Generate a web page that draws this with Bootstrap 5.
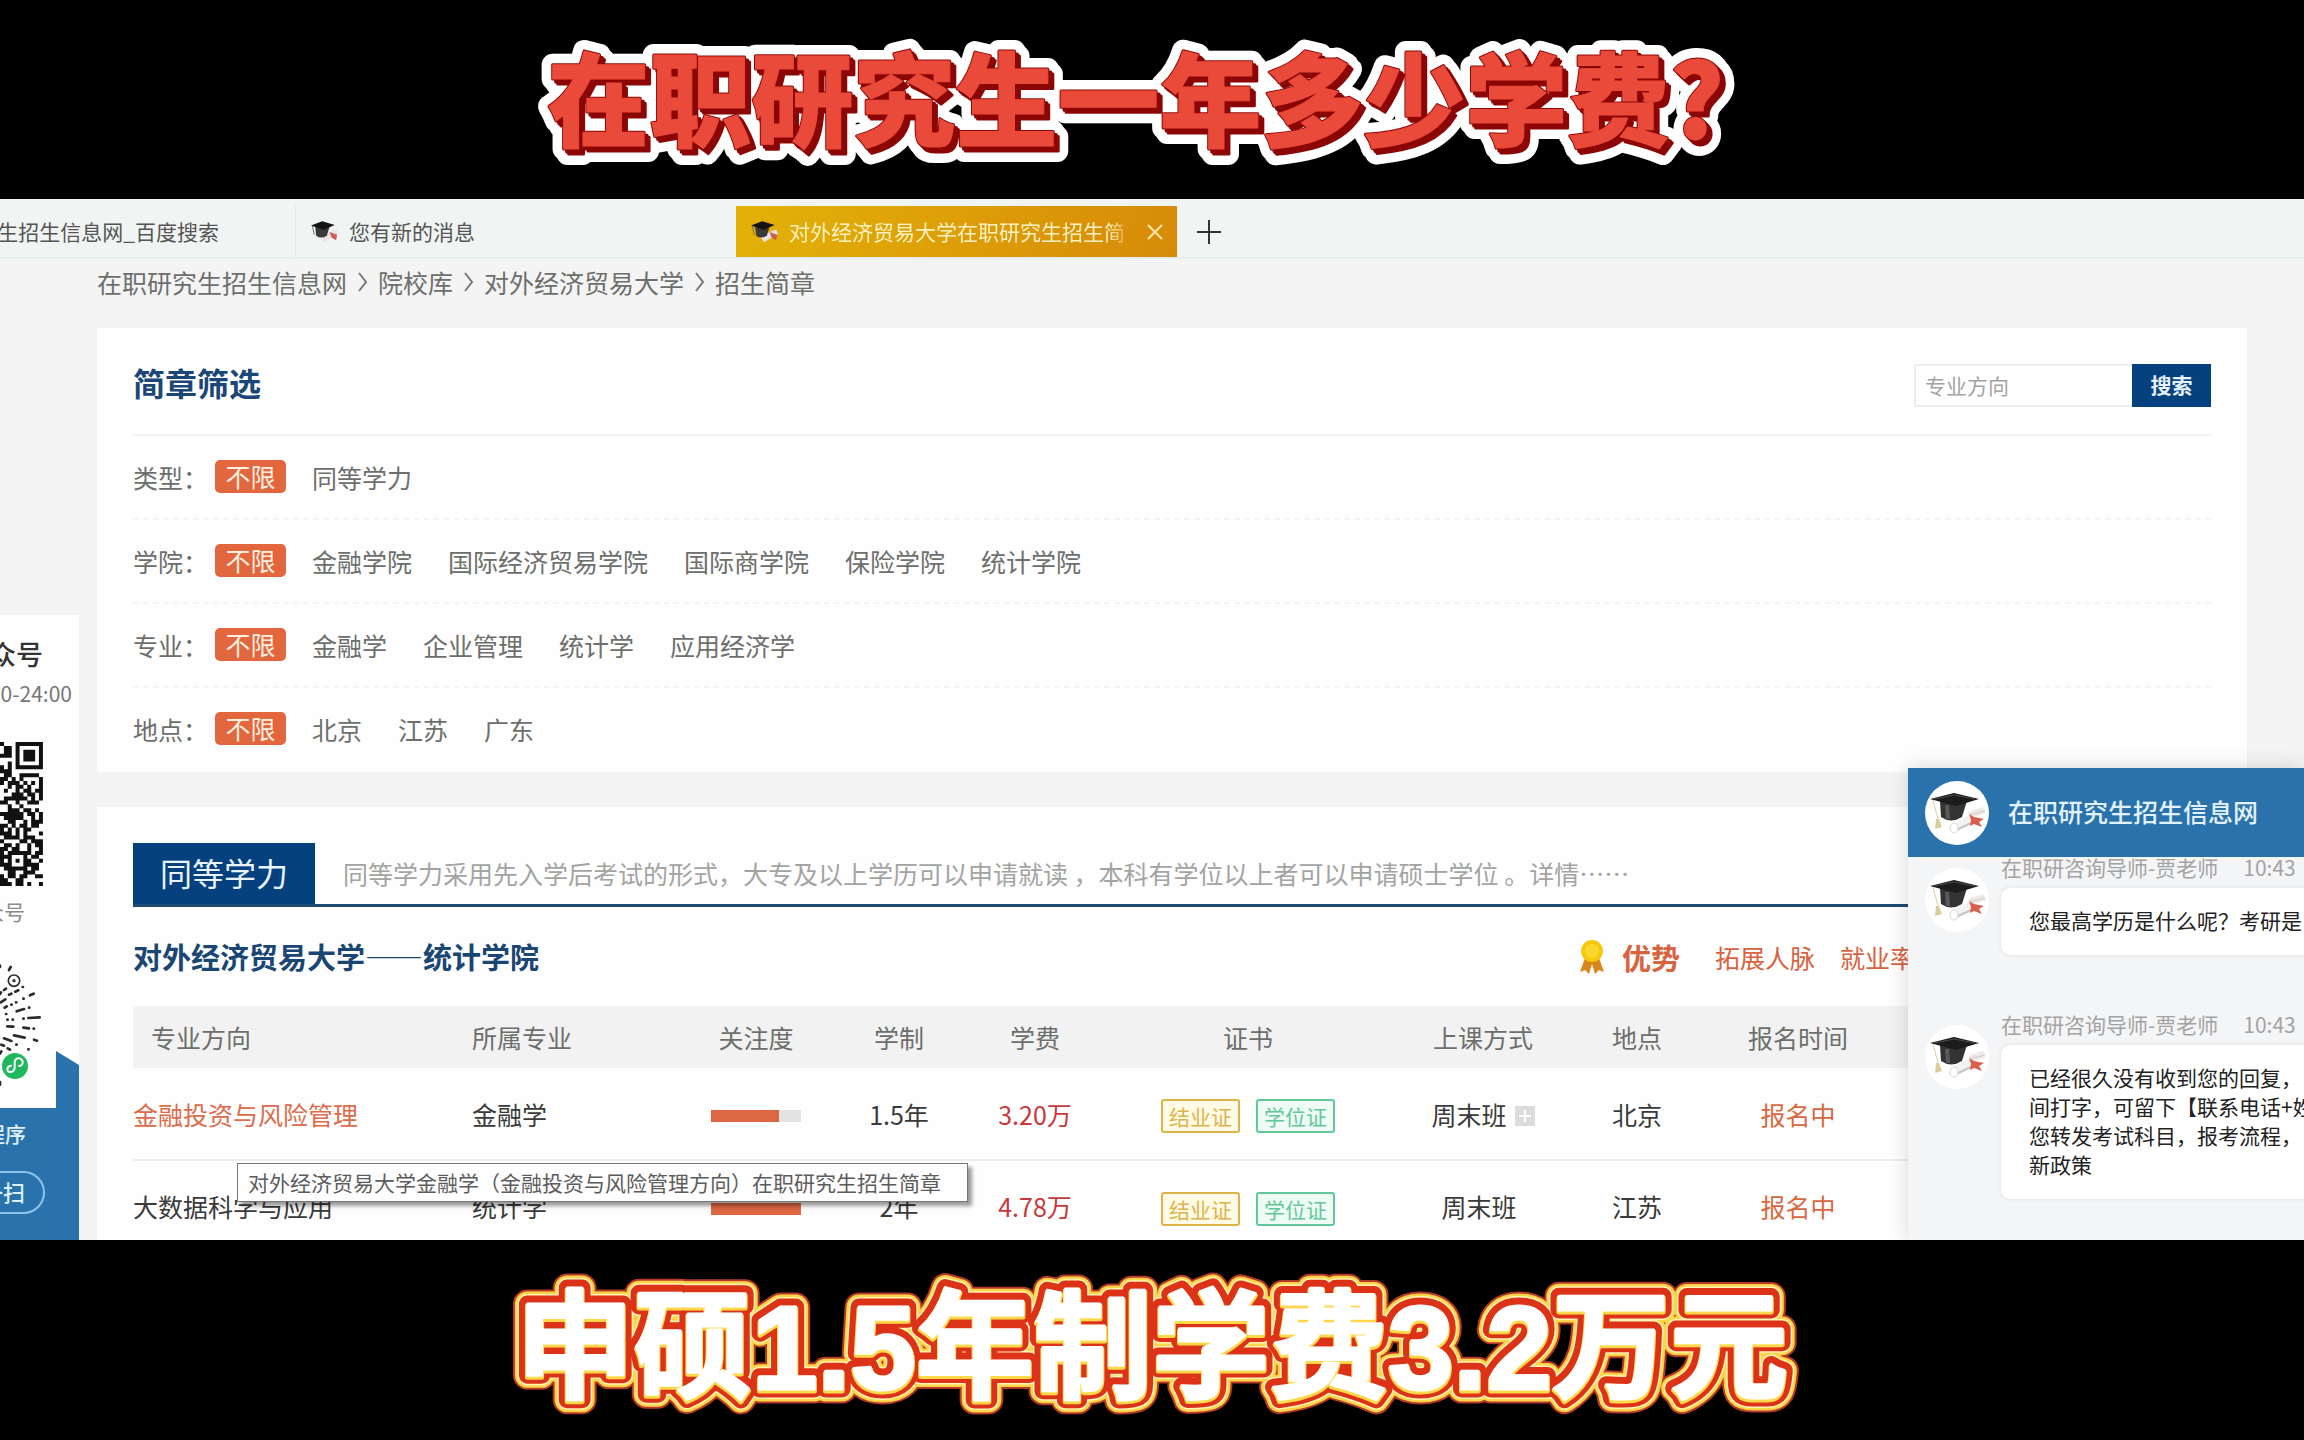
<!DOCTYPE html>
<html lang="zh-CN">
<head>
<meta charset="utf-8">
<meta name="viewport" content="width=device-width, initial-scale=1">
<title>在职研究生招生简章</title>
<link rel="stylesheet" href="https://cdn.jsdelivr.net/npm/bootstrap@5.3.0/dist/css/bootstrap.min.css">
<style>
  :root { --navy:#05407f; --sky:#2a72ac; --orange:#e2663e; --ink:#3a3a3a; --soft:#6c6f6c; }
  body { font-family:"Noto Sans CJK SC","Noto Sans",sans-serif; font-size:25px; line-height:34px; color:var(--soft); }
  a { color:inherit; text-decoration:none; }
  .banner-strip { height:200px; }
  .banner-strip.top-strip { height:199px; }
  .banner-strip svg { width:100%; height:100%; display:block; }
  .banner-word { font-weight:900; stroke-linejoin:round; text-anchor:middle; }
  .size-a { font-size:102px; }
  .size-b { font-size:118px; font-weight:700; font-family:"Liberation Sans","Noto Sans CJK SC",sans-serif; }
  .browser-bar { background:#f0f4f2; height:60px; padding-top:7px; border-bottom:2px solid #e6ebeb; font-size:21px; color:#555; }
  .tab-item { width:441px; height:51px; padding:0 12px 0 15px; gap:11px; white-space:nowrap; border-left:1px solid #e3e8e6; }
  .tab-item a { padding-bottom:2px; }
  .tab-first { width:295px; padding:0 76px 0 0; border:0; }
  .tab-item.active-tab { background:linear-gradient(110deg,#e2b208,#dc9a08 60%,#d68a0a); color:#fff3c4; border:0; }
  .tab-title { mask-image:linear-gradient(90deg,#000 92%,transparent); -webkit-mask-image:linear-gradient(90deg,#000 92%,transparent); }
  .plain-btn { background:none; border:0; padding:0; color:inherit; line-height:1; display:flex; }
  .crumbs { padding:6px 97px 29px; gap:7px; }
  .panel { margin:0 57px 35px 97px; background:#fefefe; padding:36px; }
  .panel-filter { padding-bottom:0; }
  .filter-head { padding-bottom:27px; border-bottom:2px solid #f3f3f3; }
  .filter-head h2 { font-size:32px; line-height:37px; font-weight:700; color:#1a4778; }
  .search-box { width:297px; height:43px; }
  .search-box input { font-size:21px; border:2px solid #eee; border-right:0; border-radius:0; padding:0 9px 2px; }
  .search-box input::placeholder { color:#a3a3a3; }
  .search-box button { width:79px; background:var(--navy); color:#e6f3ff; font-size:21px; font-weight:700; border:0; padding:0 0 3px; }
  .filter-row { height:84px; border-bottom:2px dashed #f4f4f4; gap:36px; padding-bottom:1px; }
  .filter-row:last-child { border-bottom:0; padding-bottom:3px; }
  .filter-lead { gap:7px; margin-right:-10px; }
  .pill { background:var(--orange); color:#fff0e2; border-radius:5px; width:71px; line-height:33px; text-align:center; }
  .type-head { border-bottom:3px solid #1e4a74; gap:28px; }
  .type-head h2 { width:182px; font-size:32px; line-height:59px; padding-bottom:2px; background:var(--navy); color:#eaf4ff; text-align:center; }
  .type-head p { color:#a2a4a2; padding-bottom:2px; }
  .school-row { height:99px; }
  .school-row h3 { font-size:29px; font-weight:700; color:#1a4674; }
  .perks { width:631px; color:#d9623f; gap:25px; }
  .perks strong { font-size:29px; margin:0 10px 0 -7px; }
  .plan { table-layout:fixed; width:100%; color:var(--ink); }
  .plan th { background:#f2f2f2; color:#6c6f6c; font-weight:400; height:62px; padding:0; text-align:center; }
  .plan td { height:92px; padding:0; text-align:center; border-bottom:2px solid #ededed; vertical-align:middle; }
  .plan th:nth-child(-n+2), .plan td:nth-child(-n+2) { text-align:left; }
  .plan th:first-child { padding-left:18px; }
  .plan .fee { color:#c6393a; }
  .plan .open { color:#d9683f; }
  .plan .padded { padding:5px 0 0; }
  .heat { width:90px; height:12px; border-radius:0; background:#e3e3e3; margin:0 auto; }
  .heat div { background:#dc6742; }
  .cert { font-size:21px; line-height:30px; width:79px; border:2px solid; border-radius:3px; }
  .cert-a { color:#dcb44a; background:#fffbe6; }
  .cert-b { color:#62c79b; background:#eefcf5; }
  .hover-tip { left:104px; top:95px; z-index:3; background:#fefefe; border:1px solid #777; box-shadow:4px 4px 4px rgba(0,0,0,.4); padding:0 12px 0 10px; width:731px; font-size:21px; line-height:37px; color:#5c5c5c; white-space:nowrap; text-align:left; }
  .side-card { left:0; top:416px; bottom:0; width:79px; background:#fefefe; overflow:hidden; z-index:4; }
  .side-line { white-space:nowrap; display:flex; justify-content:flex-end; }
  .side-title { font-size:27px; font-weight:500; line-height:38px; color:#333; padding:20px 36px 0 0; }
  .side-hours { font-size:21px; color:#777; line-height:40px; padding-right:7px; }
  .side-note { font-size:21px; color:#8a8a8a; padding-right:54px; line-height:30px; margin:10px 0 33px; }
  .side-foot { left:0; bottom:0; width:79px; height:189px; background:var(--sky); color:#dff0fb; clip-path:polygon(0 57px,56px 57px,56px 0,79px 14px,79px 100%,0 100%); padding-top:67px; font-size:21px; line-height:30px; font-weight:500; }
  .scan-btn { background:none; color:inherit; border:2px solid #8fc4ea; border-radius:22px; height:43px; width:90px; margin:23px 0 0 -45px; padding:0 18px 3px 0; font-size:22px; font-weight:500; text-align:right; display:block; white-space:nowrap; }
  .chat { right:0; top:569px; bottom:0; width:396px; background:#f4f5f7; z-index:5; box-shadow:0 0 20px rgba(0,0,0,.16); overflow:hidden; }
  .chat-head { background:var(--sky); color:#e2f2fd; height:89px; padding-left:17px; gap:19px; font-weight:500; }
  .avatar { width:64px; height:64px; border-radius:50%; background:#fff; flex:none; }
  .chat-msg { padding-left:17px; gap:12px; margin-bottom:59px; white-space:nowrap; font-size:21px; }
  .chat-msg .avatar { margin-top:11px; }
  .msg-name { color:#a3a3a3; line-height:20px; gap:25px; margin-bottom:11px; }
  .bubble { background:#fff; color:#222; border-radius:9px; padding:18px 28px 20px; line-height:29px; box-shadow:0 0 4px rgba(0,0,0,.1); width:440px; }
</style>
<script src="https://cdn.jsdelivr.net/npm/bootstrap@5.3.0/dist/js/bootstrap.bundle.min.js"></script>
</head>
<body class="bg-black vh-100 d-flex flex-column overflow-hidden">

<svg width="0" height="0" class="position-absolute" aria-hidden="true">
  <symbol id="cap" viewBox="0 0 64 64">
    <path d="M43 31 58 26 61 32 46 37z" fill="#eee9e6"/><path d="M45 34 60 30" stroke="#cfcac8"/>
    <path d="M26 43 44 34 47 42 31 51z" fill="#f3f1f1"/><path d="M29 50 46 42" stroke="#c9c5c5" stroke-width="2"/>
    <ellipse cx="29" cy="47" rx="4" ry="5" fill="#fff" stroke="#d8d4d4"/>
    <path d="M44 33 49 36 59 38 54 41 57 46 49 43 45 45 46 39z" fill="#d8604c"/>
    <path d="M15 20 16 36 Q26 43 37 36 L42 20z" fill="#333"/><path d="M22 24 23 38" stroke="#5a5a5a" stroke-width="4"/>
    <path d="M5 18 29 12 54 18 31 25z" fill="#1c1c1c"/><path d="M9 18 29 14 50 18" fill="none" stroke="#4b4b4b"/>
    <path d="M8 19 13 38" fill="none" stroke="#d8cfa0"/><path d="M11 38 14 38 17 46 10 48z" fill="#d9cf9c"/>
  </symbol>
  <symbol id="cap-small" viewBox="4 8 58 46">
    <path d="M24 42 58 26 62 36 32 54z" fill="#e9e2e2"/><path d="M44 32 60 38 58 50 48 44z" fill="#cf5b55"/>
    <path d="M13 20 15 40 Q26 48 38 40 L44 20z" fill="#3a3a3a"/><path d="M4 18 28 9 55 17 31 27z" fill="#141414"/>
    <path d="M7 19 11 38" stroke="#6b6550" stroke-width="2"/>
  </symbol>
</svg>

<header class="banner-strip top-strip flex-shrink-0">
  <svg role="img" aria-label="标题">
    <g fill="#fff" stroke="#fff" stroke-width="22"><use href="#headline"/><use href="#headline" x="4" y="5"/></g>
    <g fill="#8c0606" stroke="#8c0606" stroke-width="3"><use href="#headline" x="5" y="5"/><use href="#headline" x="3" y="3"/><use href="#headline"/></g>
    <g fill="#ea4a39" stroke="#ea4a39" stroke-width="1"><text id="headline" class="banner-word size-a" x="49.3%" y="139">在职研究生一年多少学费?</text></g>
  </svg>
</header>

<main class="position-relative flex-grow-1 overflow-hidden" style="background:#f4f4f4">
  <nav class="browser-bar d-flex" aria-label="标签页">
    <div class="tab-item tab-first d-flex align-items-center justify-content-end overflow-hidden"><a href="#">生招生信息网_百度搜索</a></div>
    <div class="tab-item d-flex align-items-center"><svg width="27" height="23"><use href="#cap-small"/></svg><a href="#">您有新的消息</a></div>
    <div class="tab-item active-tab d-flex align-items-center"><svg width="27" height="23" class="flex-shrink-0"><use href="#cap-small"/></svg>
      <a href="#" class="tab-title flex-grow-1">对外经济贸易大学在职研究生招生简</a>
      <button class="plain-btn" aria-label="关闭标签"><svg width="20" height="20" viewBox="0 0 20 20"><path d="M3 3 17 17M17 3 3 17" stroke="#ffe9a8" stroke-width="2"/></svg></button></div>
    <button class="plain-btn align-items-center ms-3 ps-1" style="height:51px" aria-label="新建标签"><svg width="24" height="24" viewBox="0 0 24 24"><path d="M12 0V24M0 12H24" stroke="#333" stroke-width="2"/></svg></button>
  </nav>

  <nav class="crumbs d-flex align-items-center" aria-label="面包屑">
    <a href="#">在职研究生招生信息网</a>
    <svg width="17" height="20" viewBox="0 0 17 20"><path d="M5 1 12 10 5 19" fill="none" stroke="#777" stroke-width="2"/></svg>
    <a href="#">院校库</a>
    <svg width="17" height="20" viewBox="0 0 17 20"><path d="M5 1 12 10 5 19" fill="none" stroke="#777" stroke-width="2"/></svg>
    <a href="#">对外经济贸易大学</a>
    <svg width="17" height="20" viewBox="0 0 17 20"><path d="M5 1 12 10 5 19" fill="none" stroke="#777" stroke-width="2"/></svg>
    <span>招生简章</span>
  </nav>

  <section class="panel panel-filter">
    <div class="filter-head d-flex justify-content-between">
      <h2 class="m-0">简章筛选</h2>
      <form class="search-box d-flex"><input class="form-control h-100" type="text" aria-label="专业方向" placeholder="专业方向"><button type="button" class="flex-shrink-0">搜索</button></form>
    </div>
    <div class="filter-row d-flex align-items-center"><div class="filter-lead d-flex align-items-center"><span>类型：</span><a href="#" class="pill">不限</a></div><a href="#">同等学力</a></div>
    <div class="filter-row d-flex align-items-center"><div class="filter-lead d-flex align-items-center"><span>学院：</span><a href="#" class="pill">不限</a></div><a href="#">金融学院</a><a href="#">国际经济贸易学院</a><a href="#">国际商学院</a><a href="#">保险学院</a><a href="#">统计学院</a></div>
    <div class="filter-row d-flex align-items-center"><div class="filter-lead d-flex align-items-center"><span>专业：</span><a href="#" class="pill">不限</a></div><a href="#">金融学</a><a href="#">企业管理</a><a href="#">统计学</a><a href="#">应用经济学</a></div>
    <div class="filter-row d-flex align-items-center"><div class="filter-lead d-flex align-items-center"><span>地点：</span><a href="#" class="pill">不限</a></div><a href="#">北京</a><a href="#">江苏</a><a href="#">广东</a></div>
  </section>

  <section class="panel">
    <div class="type-head d-flex align-items-center">
      <h2 class="mb-0 fw-normal">同等学力</h2>
      <p class="m-0 text-nowrap">同等学力采用先入学后考试的形式，大专及以上学历可以申请就读 ，本科有学位以上者可以申请硕士学位 。详情……</p>
    </div>
    <div class="school-row d-flex align-items-center justify-content-between">
      <h3 class="m-0">对外经济贸易大学——统计学院</h3>
      <div class="perks d-flex align-items-center">
        <svg width="24" height="34" viewBox="0 0 24 34"><path d="M5 18 0 32 5 30 9 34 12 24 15 34 19 30 24 32 19 18z" fill="#d9871c"/><circle cx="12" cy="11" r="11" fill="#f6c90e"/><circle cx="12" cy="11" r="7" fill="#fbd62b"/></svg>
        <strong>优势</strong><span>拓展人脉</span><span>就业率</span>
      </div>
    </div>
    <table class="plan">
      <colgroup><col style="width:339px"><col style="width:208px"><col style="width:152px"><col style="width:134px"><col style="width:138px"><col style="width:288px"><col style="width:182px"><col style="width:126px"><col style="width:196px"><col></colgroup>
      <thead><tr><th>专业方向</th><th>所属专业</th><th>关注度</th><th>学制</th><th>学费</th><th>证书</th><th>上课方式</th><th>地点</th><th>报名时间</th><th></th></tr></thead>
      <tbody>
        <tr>
          <td class="position-relative"><a href="#" style="color:#dd6b4a">金融投资与风险管理</a><div class="hover-tip position-absolute" role="tooltip">对外经济贸易大学金融学（金融投资与风险管理方向）在职研究生招生简章</div></td>
          <td>金融学</td><td class="padded"><div class="progress heat"><div style="width:75%"></div></div></td><td>1.5年</td><td class="fee">3.20万</td>
          <td class="padded"><div class="d-flex justify-content-center gap-3"><span class="cert cert-a">结业证</span><span class="cert cert-b">学位证</span></div></td>
          <td><span class="d-inline-flex align-items-center gap-2">周末班<svg width="20" height="20" viewBox="0 0 20 20" class="mt-1"><path fill="#dcdcdc" d="M0 0H20V20H0z"/><path d="M10 4V16M4 10H16" stroke="#fff" stroke-width="2"/></svg></span></td>
          <td>北京</td><td class="open">报名中</td><td></td>
        </tr>
        <tr>
          <td><a href="#">大数据科学与应用</a></td><td>统计学</td><td class="padded"><div class="progress heat"><div style="width:100%"></div></div></td><td>2年</td><td class="fee">4.78万</td>
          <td class="padded"><div class="d-flex justify-content-center gap-3"><span class="cert cert-a">结业证</span><span class="cert cert-b">学位证</span></div></td>
          <td class="pe-2">周末班</td><td>江苏</td><td class="open">报名中</td><td></td>
        </tr>
      </tbody>
    </table>
  </section>

  <aside class="side-card position-absolute">
    <div class="side-line side-title">众号</div>
    <div class="side-line side-hours">0-24:00</div>
    <svg id="qr" class="d-block" width="44" height="144" viewBox="0 0 44 144" style="margin-top:29px"><path fill="#111"/></svg>
    <div class="side-line side-note">众号</div>
    <svg class="d-block" width="56" height="130" viewBox="0 30 168 390">
      <g stroke="#2b2b2b" stroke-width="8" stroke-linecap="round" fill="none">
        <circle cx="42" cy="95" r="17" stroke-width="5"/><circle cx="42" cy="95" r="3" stroke-width="4"/>
        <path d="M27 63 32 54M0 50v4M68 114h1M90 139 101 134M70 149h1M50 187 72 180M87 176h1M85 207 119 205M70 209h1M70 236 87 238M101 239h1M42 259 74 266M102 272 111 275M85 301h1M49 287h1M46 128 55 124M12 123 18 119M27 137 34 134M2 160 16 151M14 176 20 172M34 167h1M48 160h1M18 195h1M22 212h1M38 212h1M22 232 40 233M12 268 34 276M4 287 12 290M23 298 30 302M0 314 4 307M0 399v8M0 135 3 130"/>
      </g>
      <circle cx="45" cy="351" r="39" fill="#1fb85c"/>
      <path d="M44 353C44 372 22 374 22 361 22 354 29 350 33 350M44 353V340C44 322 68 326 68 340 68 347 62 351 57 351" fill="none" stroke="#fff" stroke-width="6" stroke-linecap="round"/>
    </svg>
    <div class="side-foot position-absolute">
      <div class="side-line" style="padding-right:53px">程序</div>
      <button class="scan-btn">一扫</button>
    </div>
  </aside>

  <aside class="chat position-absolute">
    <div class="chat-head d-flex align-items-center text-nowrap"><svg class="avatar"><use href="#cap"/></svg><span class="pb-1">在职研究生招生信息网</span></div>
    <div class="chat-msg d-flex">
      <svg class="avatar"><use href="#cap"/></svg>
      <div><div class="msg-name d-flex"><span>在职研咨询导师-贾老师</span><span>10:43</span></div>
        <div class="bubble">您最高学历是什么呢？考研是</div></div>
    </div>
    <div class="chat-msg d-flex">
      <svg class="avatar"><use href="#cap"/></svg>
      <div><div class="msg-name d-flex"><span>在职研咨询导师-贾老师</span><span>10:43</span></div>
        <div class="bubble">已经很久没有收到您的回复，<br>间打字，可留下【联系电话+姓<br>您转发考试科目，报考流程，<br>新政策</div></div>
    </div>
  </aside>
</main>

<footer class="banner-strip flex-shrink-0">
  <svg role="img" aria-label="字幕">
    <g fill="#b5382c" stroke="#b5382c" stroke-width="29"><use href="#caption"/></g>
    <g fill="#ffd447" stroke="#ffd447" stroke-width="25"><use href="#caption"/></g>
    <g fill="#fff3b8" stroke="#fff3b8" stroke-width="20"><use href="#caption"/></g>
    <g fill="#dc3318" stroke="#dc3318" stroke-width="17"><use href="#caption"/></g>
    <g fill="#ffd84a" stroke="#ffd84a" stroke-width="5"><use href="#caption" y="2"/></g>
    <g fill="#fff" stroke="#fff" stroke-width="3"><text id="caption" class="banner-word size-b" x="50%" y="149">申硕1.5年制学费3.2万元</text></g>
  </svg>
</footer>

<script>
  // QR modules, one string per row
  const rows = "10001111111 01101000001 01101011101 11101011101 00001011101 00101000001 10101111111 11100000000 01100111110 11010100001 10111010101 00101101001 01001011011 00011101101 01111110101 11001001110 00100100000 00111011010 11111101101 01111100101 00110010111 11010110110 10101011000 11101010001 01111011100 10000110111 01101001011 11011001001 10111111011 11100010110 10101011001 11100011110 01111110110 00110011100 10110110011 11001100000 11101101001".split(" ");
  const u = 144 / 37;
  let d = "";
  rows.forEach((r, y) => [...r].forEach((c, x) => { if (c === "1") d += `M${(x * u).toFixed(2)} ${(y * u).toFixed(2)}h4v4h-4z`; }));
  document.querySelector("#qr path").setAttribute("d", d);
</script>
</body>
</html>
